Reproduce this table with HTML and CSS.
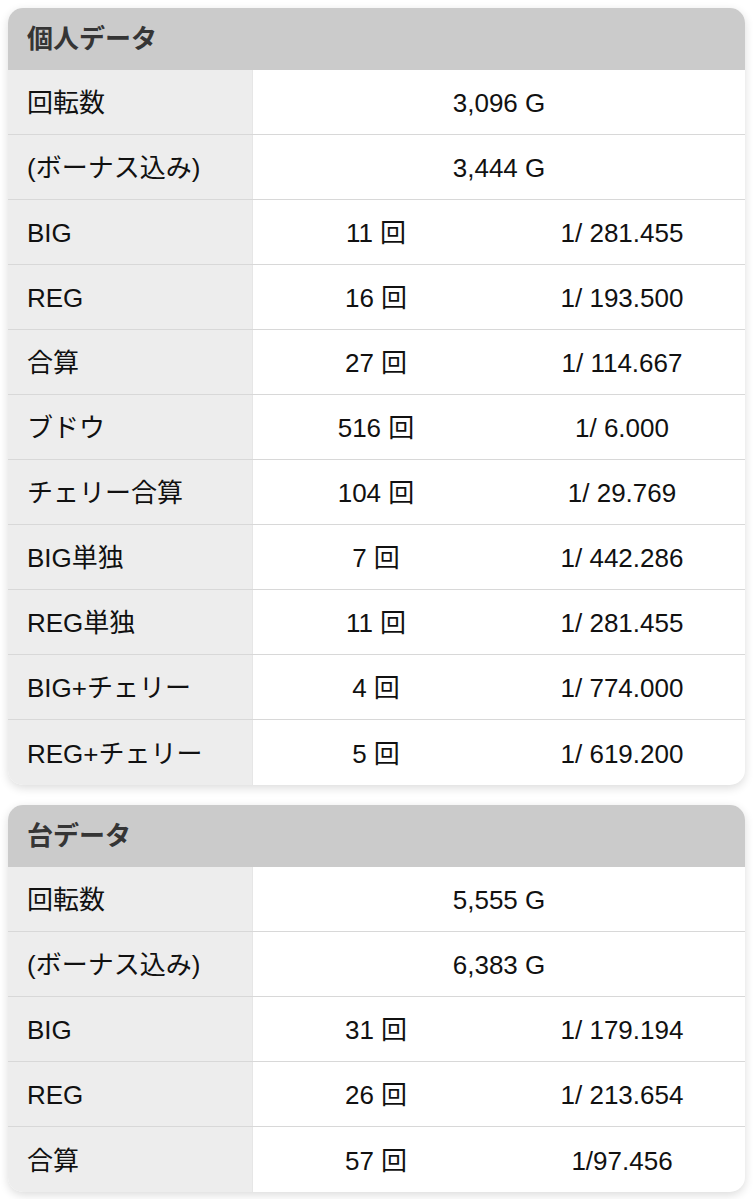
FILE: index.html
```html
<!DOCTYPE html>
<html lang="ja">
<head>
<meta charset="utf-8">
<link rel="stylesheet" href="styles.css">
</head>
<body>
<section class="card">
  <h2 class="card-head">個人データ</h2>
  <div class="row"><div class="label">回転数</div><div class="val span">3,096 G</div></div>
  <div class="row"><div class="label">(ボーナス込み)</div><div class="val span">3,444 G</div></div>
  <div class="row"><div class="label">BIG</div><div class="val">11 回</div><div class="val">1/ 281.455</div></div>
  <div class="row"><div class="label">REG</div><div class="val">16 回</div><div class="val">1/ 193.500</div></div>
  <div class="row"><div class="label">合算</div><div class="val">27 回</div><div class="val">1/ 114.667</div></div>
  <div class="row"><div class="label">ブドウ</div><div class="val">516 回</div><div class="val">1/ 6.000</div></div>
  <div class="row"><div class="label">チェリー合算</div><div class="val">104 回</div><div class="val">1/ 29.769</div></div>
  <div class="row"><div class="label">BIG単独</div><div class="val">7 回</div><div class="val">1/ 442.286</div></div>
  <div class="row"><div class="label">REG単独</div><div class="val">11 回</div><div class="val">1/ 281.455</div></div>
  <div class="row"><div class="label">BIG+チェリー</div><div class="val">4 回</div><div class="val">1/ 774.000</div></div>
  <div class="row last"><div class="label">REG+チェリー</div><div class="val">5 回</div><div class="val">1/ 619.200</div></div>
</section>
<section class="card">
  <h2 class="card-head">台データ</h2>
  <div class="row"><div class="label">回転数</div><div class="val span">5,555 G</div></div>
  <div class="row"><div class="label">(ボーナス込み)</div><div class="val span">6,383 G</div></div>
  <div class="row"><div class="label">BIG</div><div class="val">31 回</div><div class="val">1/ 179.194</div></div>
  <div class="row"><div class="label">REG</div><div class="val">26 回</div><div class="val">1/ 213.654</div></div>
  <div class="row last"><div class="label">合算</div><div class="val">57 回</div><div class="val">1/97.456</div></div>
</section>
</body>
</html>
```

FILE: styles.css
```css
html, body {
  margin: 0;
  padding: 0;
  background: #ffffff;
}
body {
  padding: 8px;
  font-family: "Liberation Sans", "Noto Sans CJK JP", sans-serif;
  color: #111111;
}
.card {
  background: #ffffff;
  border-radius: 15px;
  overflow: hidden;
  box-shadow: 0 3px 10px rgba(0, 0, 0, 0.14);
  margin-bottom: 20px;
}
.card-head {
  margin: 0;
  height: 62px;
  display: flex;
  align-items: center;
  padding-left: 19px;
  background: #cbcbcb;
  color: #353535;
  font-size: 26px;
  line-height: 30px;
  font-weight: bold;
}
.row {
  display: grid;
  grid-template-columns: 245px 1fr 1fr;
  height: 64px;
  border-bottom: 1px solid #d8d8d8;
  font-size: 26px;
  line-height: 30px;
}
.row.last {
  border-bottom: none;
  height: 65px;
}
.label {
  background: #ededed;
  border-right: 1px solid #e6e6e6;
  display: flex;
  align-items: center;
  padding-left: 19px;
  padding-top: 2px;
}
.val {
  display: flex;
  align-items: center;
  justify-content: center;
  padding-top: 2px;
}
.val.span {
  grid-column: 2 / 4;
}
```
